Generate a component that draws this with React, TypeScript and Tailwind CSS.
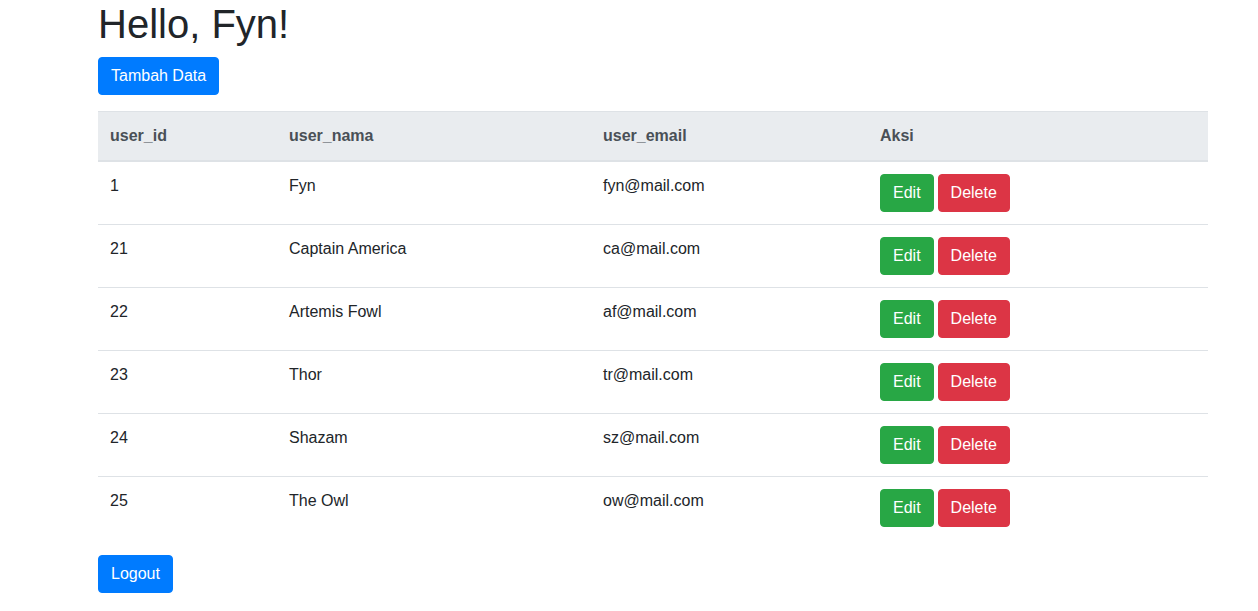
const users = [
  { id: 1, nama: 'Fyn', email: 'fyn@mail.com' },
  { id: 21, nama: 'Captain America', email: 'ca@mail.com' },
  { id: 22, nama: 'Artemis Fowl', email: 'af@mail.com' },
  { id: 23, nama: 'Thor', email: 'tr@mail.com' },
  { id: 24, nama: 'Shazam', email: 'sz@mail.com' },
  { id: 25, nama: 'The Owl', email: 'ow@mail.com' },
]

export default function App() {
  return (
    <div className="min-h-screen bg-white text-[#212529] text-base leading-6" style={{ fontFamily: '"Liberation Sans", Arial, sans-serif' }}>
      <div className="ml-[98px] w-[1110px]">
        <h1 className="text-[40px] leading-[48px] font-normal mb-[9px]">Hello, Fyn!</h1>
        <button className="bg-[#007bff] text-white px-3 py-1.5 rounded border border-[#007bff] leading-6">Tambah Data</button>

        <table className="w-full mt-4 mb-4 border-collapse">
          <thead>
            <tr className="bg-[#e9ecef] text-[#495057] text-left">
              <th className="w-[179px] p-3 font-bold border-t border-b-2 border-[#dee2e6]">user_id</th>
              <th className="w-[314px] p-3 font-bold border-t border-b-2 border-[#dee2e6]">user_nama</th>
              <th className="w-[277px] p-3 font-bold border-t border-b-2 border-[#dee2e6]">user_email</th>
              <th className="p-3 font-bold border-t border-b-2 border-[#dee2e6]">Aksi</th>
            </tr>
          </thead>
          <tbody>
            {users.map((u, i) => (
              <tr key={u.id}>
                <td className={`p-3 align-top ${i > 0 ? 'border-t border-[#dee2e6]' : ''}`}>{u.id}</td>
                <td className={`p-3 align-top ${i > 0 ? 'border-t border-[#dee2e6]' : ''}`}>{u.nama}</td>
                <td className={`p-3 align-top ${i > 0 ? 'border-t border-[#dee2e6]' : ''}`}>{u.email}</td>
                <td className={`p-3 align-top ${i > 0 ? 'border-t border-[#dee2e6]' : ''}`}>
                  <div className="flex gap-1">
                    <button className="bg-[#28a745] border border-[#28a745] text-white px-3 py-1.5 rounded leading-6">Edit</button>
                    <button className="bg-[#dc3545] border border-[#dc3545] text-white px-3 py-1.5 rounded leading-6">Delete</button>
                  </div>
                </td>
              </tr>
            ))}
          </tbody>
        </table>

        <button className="bg-[#007bff] text-white px-3 py-1.5 rounded border border-[#007bff] leading-6">Logout</button>
      </div>
    </div>
  )
}
